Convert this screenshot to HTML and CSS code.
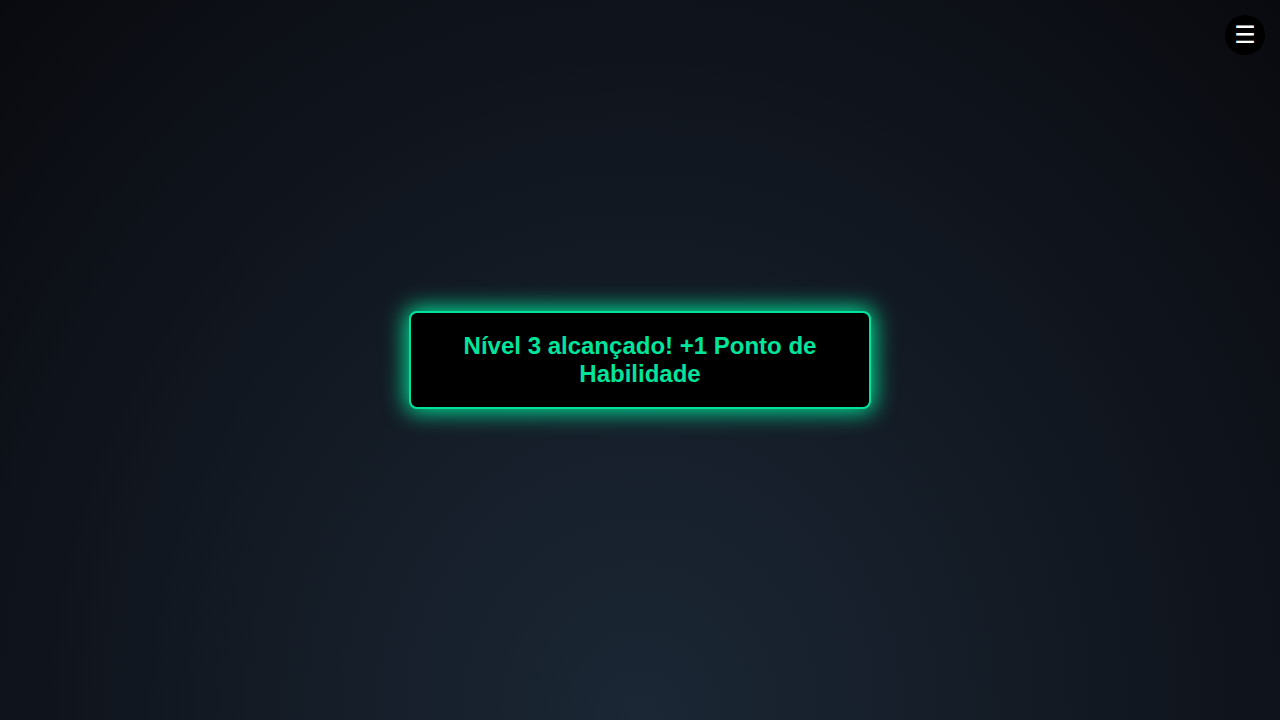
FILE: index.html
```html
<!DOCTYPE html>
<html lang="pt">
<head>
<meta charset="utf-8">
<title>Nível</title>
<link rel="stylesheet" href="styles.css">
</head>
<body>
<button class="menu-btn" aria-label="Menu">☰</button>
<main class="stage">
  <div class="toast">Nível 3 alcançado! +1 Ponto de Habilidade</div>
</main>
</body>
</html>
```
FILE: styles.css
```css
html, body {
  margin: 0;
  padding: 0;
  width: 100%;
  height: 100%;
}
body {
  background: radial-gradient(ellipse at bottom, #1b2735 0%, #090a0f 100%);
  font-family: "Liberation Sans", Arial, sans-serif;
  overflow: hidden;
}
.stage {
  height: 100%;
  display: flex;
  align-items: center;
  justify-content: center;
}
.toast {
  box-sizing: border-box;
  width: 462px;
  padding: 19px 30px;
  background: #000;
  border: 2px solid #00e59b;
  border-radius: 8px;
  box-shadow: 0 0 22px 3px #00e59b;
  color: #00e59b;
  font-weight: bold;
  font-size: 24px;
  line-height: 28px;
  text-align: center;
}
.menu-btn {
  position: absolute;
  top: 15px;
  right: 15px;
  width: 40px;
  height: 40px;
  border: none;
  border-radius: 50%;
  background: #000;
  color: #fff;
  font-size: 24px;
  line-height: 40px;
  padding: 0;
  font-family: "DejaVu Sans", sans-serif;
  cursor: pointer;
}
```
